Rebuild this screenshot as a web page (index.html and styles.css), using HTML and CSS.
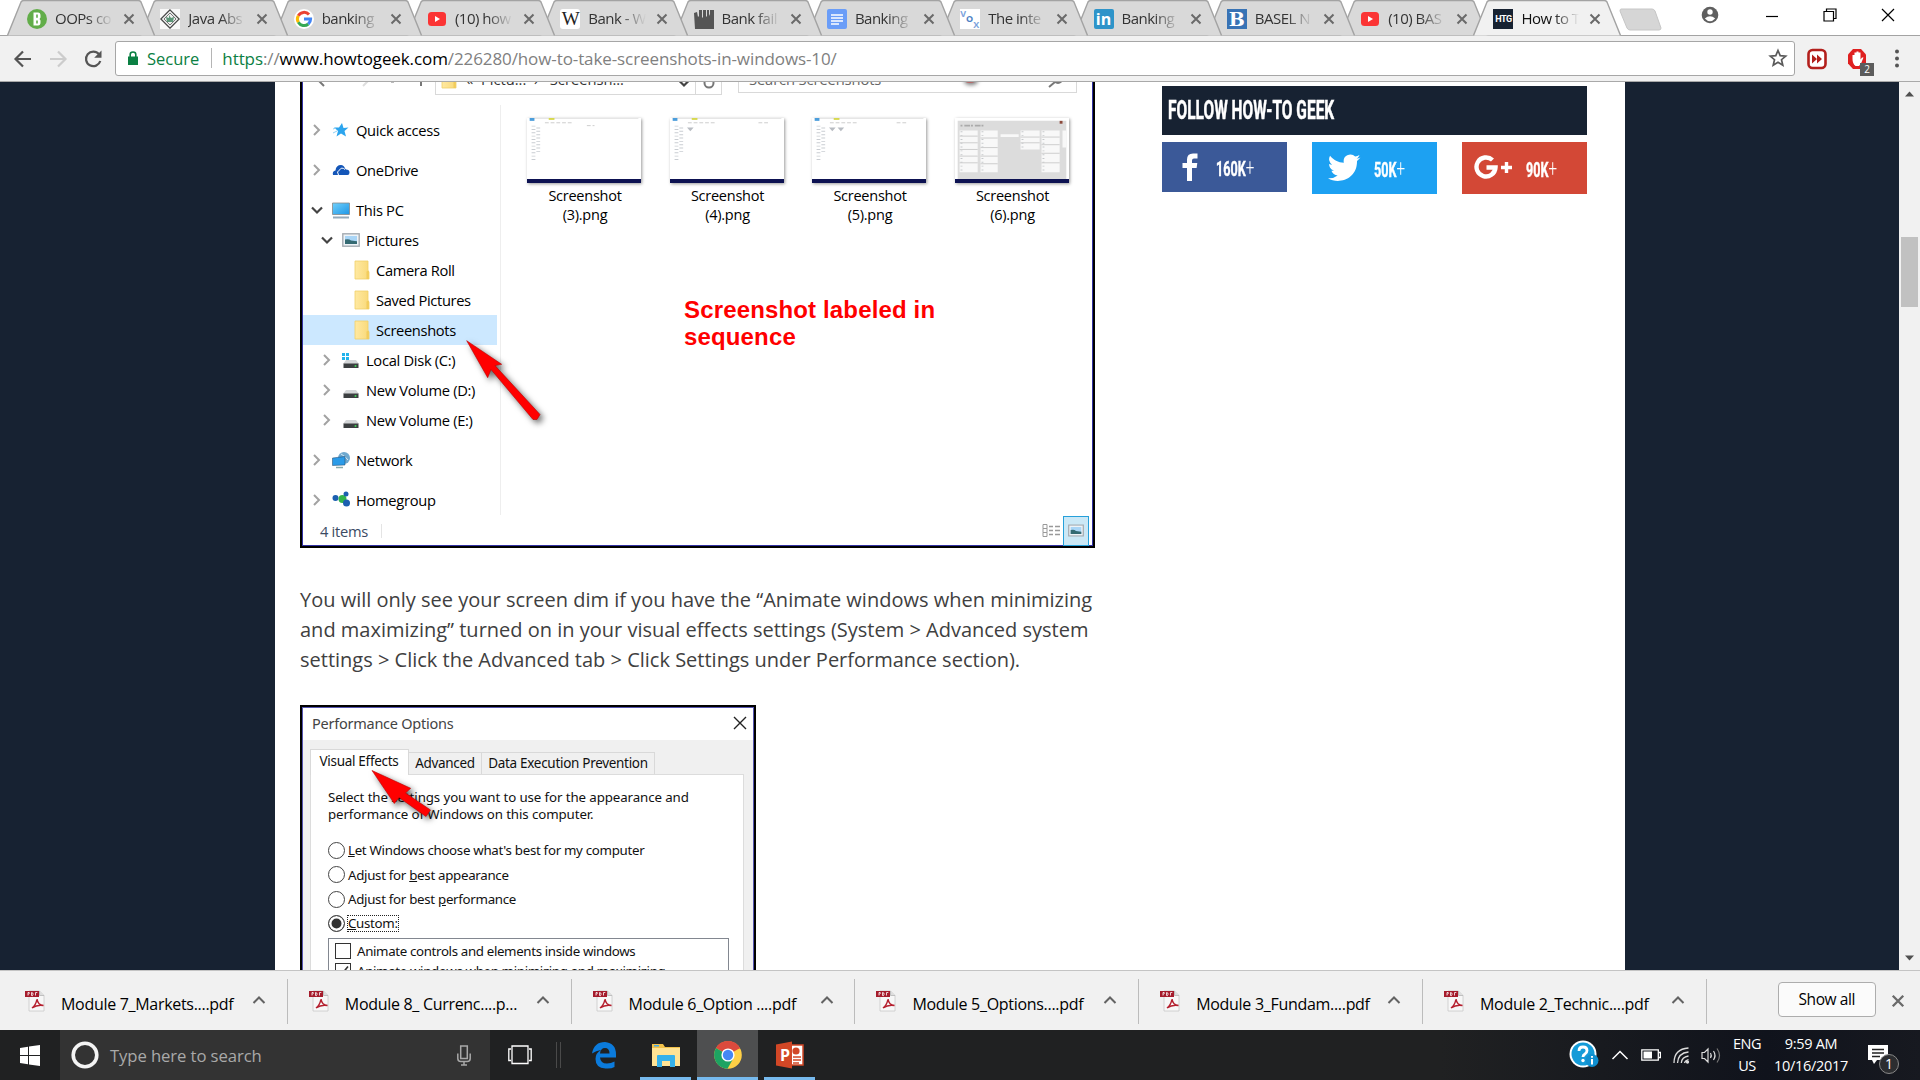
FILE: index.html
```
<!DOCTYPE html>
<html lang="en">
<head>
<meta charset="utf-8">
<title>How to Take Screenshots in Windows 10</title>
<link rel="stylesheet" href="styles.css">
</head>
<body>
<svg width="0" height="0" class="defs">
  <defs>
    <linearGradient id="screen" x1="0" y1="0" x2="1" y2="1"><stop offset="0" stop-color="#6fd0fb"/><stop offset="1" stop-color="#1e96e6"/></linearGradient>
    <linearGradient id="folderFill" x1="0" y1="0" x2="1" y2="0"><stop offset="0" stop-color="#ffe9a2"/><stop offset="1" stop-color="#f9d978"/></linearGradient>
    <symbol id="tab" viewBox="0 0 148 36"><path d="M.5 35.5 14 2Q15 .5 17 .5H131Q133 .5 134 2L147.5 35.5" stroke="#a3a3a3" stroke-width="1.4"/></symbol>
    <symbol id="x" viewBox="0 0 12 12"><path d="M1.5 1.5 10.500 10.500M10.500 1.500 1.500 10.500" stroke="#6a6a6a" stroke-width="2" fill="none"/></symbol>
    <symbol id="yt" viewBox="0 0 20 20"><rect x="1" y="3" width="18" height="14" rx="3.500" fill="#fb3434"/><path d="M8 7v6l5-3z" fill="#fff"/></symbol>
    <symbol id="right" viewBox="0 0 12 12"><path d="M3 1 8 6 3 11" stroke="#a2a2a2" stroke-width="2" fill="none"/></symbol>
    <symbol id="down" viewBox="0 0 12 12"><path d="M1 3.500 6 8.500 11 3.500" stroke="#444" stroke-width="2.200" fill="none"/></symbol>
    <symbol id="folder" viewBox="0 0 16 20"><path d="M1 1h13v9.500l1 1.500v7H1z" fill="url(#folderFill)" stroke="#f0cf68" stroke-width=".8"/><path d="M12.500 11.500 14.800 10.500v8.500h-2.300z" fill="#f2cc5c"/></symbol>
    <symbol id="drive" viewBox="0 0 18 18"><path d="M4 8h10l3 4H1z" fill="#d4d6d8"/><path d="M1.500 11.500h15V16h-15z" fill="#3c3f41"/><circle cx="13.500" cy="14" r="1" fill="#3fd455"/></symbol>
    <symbol id="pics" viewBox="0 0 18 14"><rect x=".8" y=".8" width="16.400" height="12.400" fill="#eef3f7" stroke="#a4abb1" stroke-width="1.400"/><path d="M3 3h12v8H3z" fill="#a9d5f6"/><path d="M3 6.500q4-1 6 1l6 .8V11H3z" fill="#346a72"/></symbol>
    <symbol id="pdf" viewBox="0 0 20 22"><path d="M4 1h10.500l4.500 4.500V21H4z" fill="#f7f7f7" stroke="#c9c9c9" stroke-width=".8"/><path d="M14.500 1v4.500H19" fill="#ddd" stroke="#b5b5b5" stroke-width=".8"/><path d="M0 1h14v6H0z" fill="#a51c2c"/><path d="M3 5.500v-3h1.200q1 .9-1 1.700M6.500 5.500v-3q2 0 1.500 2t-1.500 1M10.500 5.500v-3h1.800" stroke="#fff" stroke-width=".8" fill="none"/><path d="M7 18q4-3 5-9 .8 6 6.500 6.500-6-1.200-11.500 2.500z" fill="none" stroke="#b5202f" stroke-width="1.500"/></symbol>
    <symbol id="up" viewBox="0 0 14 10"><path d="M1.500 8 7 2.500 12.500 8" stroke="#636363" stroke-width="2" fill="none"/></symbol>
  </defs>
</svg>

<header class="tabs">
  <div class="tab" style="z-index:12"><svg class="shape"><use href="#tab"/></svg><svg class="fav" viewBox="0 0 20 20"><circle cx="10" cy="10" r="10" fill="#62ad49"/><path d="M6.500 3.500H11q2.500 0 2.500 3v2l-1 1.500 1 1.500v2q0 3-2.500 3H6.500z" fill="#fff"/><path d="M10 5.500v3.200M10 11.500v3" stroke="#62ad49" stroke-width="1.600"/></svg><span class="name">OOPs co</span><svg class="close"><use href="#x"/></svg></div>
  <div class="tab" style="z-index:11"><svg class="shape"><use href="#tab"/></svg><svg class="fav" viewBox="0 0 20 20"><path d="M0 0h20v20H0z" fill="#f8f8f8"/><path d="M10 .8 19.200 10 10 19.200.8 10z" fill="#eee" stroke="#444" stroke-width="1.200"/><path d="M10 4 16 10 10 16 4 10z" fill="none" stroke="#777"/><path d="M6 8l3 1V6l2 3 3-1-1 5H7z" fill="#5d9678"/></svg><span class="name">Java Abs</span><svg class="close"><use href="#x"/></svg></div>
  <div class="tab" style="z-index:10"><svg class="shape"><use href="#tab"/></svg><svg class="fav" viewBox="0 0 20 20"><circle cx="10" cy="10" r="10" fill="#fff"/><g fill="none" stroke-width="3"><path d="M15 5.600A6.600 6.600 0 0 0 4.300 6.700" stroke="#ea4335"/><path d="M4.300 6.700A6.600 6.600 0 0 0 4.300 13.300" stroke="#fbbc05"/><path d="M4.300 13.300A6.600 6.600 0 0 0 14.300 15" stroke="#34a853"/><path d="M14.300 15A6.600 6.600 0 0 0 16.600 10H10" stroke="#4285f4"/></g></svg><span class="name">banking</span><svg class="close"><use href="#x"/></svg></div>
  <div class="tab" style="z-index:9"><svg class="shape"><use href="#tab"/></svg><svg class="fav"><use href="#yt"/></svg><span class="name">(10) how</span><svg class="close"><use href="#x"/></svg></div>
  <div class="tab" style="z-index:8"><svg class="shape"><use href="#tab"/></svg><span class="fav wiki">W</span><span class="name">Bank - W</span><svg class="close"><use href="#x"/></svg></div>
  <div class="tab" style="z-index:7"><svg class="shape"><use href="#tab"/></svg><svg class="fav" viewBox="0 0 20 20"><path d="M0 4l3-1 1 5 1-1V1h3v7l1 1V1h3v6l1 1V1h2v6l1-2V1h4v19H1z" fill="#555"/></svg><span class="name">Bank fail</span><svg class="close"><use href="#x"/></svg></div>
  <div class="tab" style="z-index:6"><svg class="shape"><use href="#tab"/></svg><svg class="fav" viewBox="0 0 20 20"><rect width="20" height="20" rx="2" fill="#6a9df8"/><path d="M4 6h12M4 9h12M4 12h12M4 15h8" stroke="#fff" stroke-width="1.500"/></svg><span class="name">Banking</span><svg class="close"><use href="#x"/></svg></div>
  <div class="tab" style="z-index:5"><svg class="shape"><use href="#tab"/></svg><span class="fav vox"><b>V</b><b>O</b><b>X</b></span><span class="name">The inte</span><svg class="close"><use href="#x"/></svg></div>
  <div class="tab" style="z-index:4"><svg class="shape"><use href="#tab"/></svg><span class="fav linked">in</span><span class="name">Banking</span><svg class="close"><use href="#x"/></svg></div>
  <div class="tab" style="z-index:3"><svg class="shape"><use href="#tab"/></svg><span class="fav basel">B</span><span class="name">BASEL N</span><svg class="close"><use href="#x"/></svg></div>
  <div class="tab" style="z-index:2"><svg class="shape"><use href="#tab"/></svg><svg class="fav"><use href="#yt"/></svg><span class="name">(10) BAS</span><svg class="close"><use href="#x"/></svg></div>
  <div class="tab active" style="z-index:13"><svg class="shape"><use href="#tab"/></svg><span class="fav htg">HTG</span><span class="name">How to T</span><svg class="close"><use href="#x"/></svg></div>
  <svg class="newtab" width="44" height="24" viewBox="0 0 44 24"><path d="M3 1h31q2 0 3 2l6 17q0 2-2 2H12q-2 0-3-2L2 3Q2 1 3 1z" fill="#d6d6d6" stroke="#c6c6c6"/></svg>
  <div class="winctl">
    <svg width="18" height="18" viewBox="0 0 18 18"><circle cx="9" cy="9" r="8.300" fill="#5f5f5f"/><circle cx="9" cy="6" r="2.700" fill="#fff"/><path d="M3.800 12.500q5.200-4.500 10.400 0Q9 18 3.800 12.500z" fill="#fff"/></svg>
    <svg width="14" height="14" viewBox="0 0 14 14"><path d="M1 8.500h12" stroke="#000" stroke-width="1.200"/></svg>
    <svg width="14" height="14" viewBox="0 0 14 14" fill="none" stroke="#000" stroke-width="1.200"><path d="M1 3.500h9.500V13H1zM3.500 3.500V1H13v9.500h-2.500"/></svg>
    <svg width="14" height="14" viewBox="0 0 14 14"><path d="M1 1 13 13M13 1 1 13" stroke="#000" stroke-width="1.200"/></svg>
  </div>
</header>

<div class="toolbar">
  <svg class="nav" viewBox="0 0 20 20"><path d="M18 10H3M10 2.500 2.500 10l7.500 7.500" stroke="#555" stroke-width="2.200" fill="none"/></svg>
  <svg class="nav" viewBox="0 0 20 20"><path d="M2 10h15M10 2.500l7.500 7.500-7.500 7.500" stroke="#ccc" stroke-width="2.200" fill="none"/></svg>
  <svg class="nav" viewBox="0 0 20 20"><path d="M16 5.300A7.300 7.300 0 1 0 17.300 12" stroke="#555" stroke-width="2.200" fill="none"/><path d="M18.500 1.500v7.300h-7.300z" fill="#555"/></svg>
  <div class="address">
    <svg width="12" height="15" viewBox="0 0 12 15"><path d="M1 5.500h10V14H1z" fill="#0b8043"/><path d="M3.200 6V3.500q0-2.500 2.800-2.500t2.800 2.500V6" fill="none" stroke="#0b8043" stroke-width="1.600"/></svg>
    <span class="secure">Secure</span><i class="bar"></i>
    <span class="url"><em>https</em>://<b>www.howtogeek.com</b>/226280/how-to-take-screenshots-in-windows-10/</span>
    <svg class="star" width="20" height="20" viewBox="0 0 20 20"><path d="M10 2.500l2.200 5.100 5.500.5-4.200 3.600 1.300 5.500L10 14.300l-4.800 2.900 1.300-5.500L2.300 8.100l5.500-.5z" fill="none" stroke="#5a5a5a" stroke-width="1.700"/></svg>
  </div>
  <svg class="ext" width="20" height="22" viewBox="0 0 20 22"><rect x="1.500" y="2" width="17" height="18" rx="4" fill="#fff" stroke="#b3201c" stroke-width="2.600"/><path d="M5 6.500 10 11l-5 4.500zM10 6.500 15 11l-5 4.500z" fill="#b3201c"/></svg>
  <div class="adblock"><svg width="20" height="20" viewBox="0 0 20 20"><path d="M6 0h8l5 5.500v9L14 20H6l-5-5.500v-9z" fill="#df2020"/><path d="M5.500 10V6h2V3.500h2V2.500h2v1h2v7l1.500-2h1.500l-2.500 6-2 2.500H8.500q-3-2.500-3-7z" fill="#fff"/></svg><span>2</span></div>
  <svg class="dots" width="6" height="22" viewBox="0 0 6 22" fill="#555"><circle cx="3" cy="3.500" r="2"/><circle cx="3" cy="10.500" r="2"/><circle cx="3" cy="17.500" r="2"/></svg>
</div>

<main class="viewport">
  <div class="page">
    <article class="article">
      <div class="explorer">
        <div class="exbar">
          <div class="exnav"><svg width="110" height="12" viewBox="0 0 110 12" fill="none" stroke="#777" stroke-width="2"><path d="M14-3 21 4"/><path d="M66-2 60 4" stroke="#ddd"/><path d="M88 0h3" stroke="#bbb"/></svg><i class="upmark"></i></div>
          <div class="path"><svg class="pfolder" width="16" height="20"><use href="#folder"/></svg><span>«&nbsp;&nbsp;Pictu...&nbsp; ›&nbsp;&nbsp; Screensh...</span><svg class="pdown" width="12" height="12"><use href="#down"/></svg><span class="refresh"><svg width="14" height="14" viewBox="0 0 14 14"><circle cx="7" cy="6" r="4.500" fill="none" stroke="#777" stroke-width="2"/></svg></span></div>
          <div class="exsearch"><span>Search Screenshots</span><svg width="16" height="16" viewBox="0 0 16 16" fill="none" stroke="#777" stroke-width="2"><circle cx="10" cy="5" r="4"/><path d="M7 8l-6 5"/></svg></div>
          <i class="blob"></i>
        </div>
        <div class="exbody">
          <nav class="tree">
            <div class="row gap"><svg class="ch"><use href="#right"/></svg><svg class="ic" viewBox="0 0 18 18"><path d="M10 2l1.500 5 5-.5-4 3.500 1.500 5.500-5-3-4.500 3 1.500-5.500L2 6.500h5z" fill="#2ca5ee"/><path d="M1 12l4-2M1 8l3-1" stroke="#8dd0f6"/></svg>Quick access</div>
            <div class="row gap"><svg class="ch"><use href="#right"/></svg><svg class="ic" viewBox="0 0 18 18"><path d="M1 14q-1-4 2.500-4.500Q4 4 9 4q3 0 4 3.500l1 1q3.500 0 3.500 3 0 2.500-2 2.500z" fill="#1456b8"/><path d="M6.500 14q-2.500-3.500 1-5 2-3.500 5.500-.5" fill="none" stroke="#fff"/></svg>OneDrive</div>
            <div class="row"><svg class="ch"><use href="#down"/></svg><svg class="ic" viewBox="0 0 18 18"><path d="M.5 2h17v11.500H.5z" fill="url(#screen)" stroke="#888" stroke-width=".8"/><path d="M1 16.500h16" stroke="#94aabb" stroke-width="2"/></svg>This PC</div>
            <div class="row in1"><svg class="ch"><use href="#down"/></svg><svg class="ic" viewBox="0 -2 18 18"><use href="#pics" width="18" height="14"/></svg>Pictures</div>
            <div class="row in2"><svg class="fo"><use href="#folder"/></svg>Camera Roll</div>
            <div class="row in2"><svg class="fo"><use href="#folder"/></svg>Saved Pictures</div>
            <div class="row in2 sel"><svg class="fo"><use href="#folder"/></svg>Screenshots</div>
            <div class="row in1"><svg class="ch"><use href="#right"/></svg><svg class="ic" viewBox="0 0 18 18"><use href="#drive" width="18" height="18" y="1"/><path d="M0 2h3v3H0zM4 2h3v3H4zM0 6h3v3H0zM4 6h3v3H4z" fill="#21b3ec"/></svg>Local Disk (C:)</div>
            <div class="row in1"><svg class="ch"><use href="#right"/></svg><svg class="ic" viewBox="0 -1 18 18"><use href="#drive" width="18" height="18"/></svg>New Volume (D:)</div>
            <div class="row in1 gap"><svg class="ch"><use href="#right"/></svg><svg class="ic" viewBox="0 -1 18 18"><use href="#drive" width="18" height="18"/></svg>New Volume (E:)</div>
            <div class="row gap"><svg class="ch"><use href="#right"/></svg><svg class="ic" viewBox="0 0 18 18"><circle cx="12" cy="7" r="6" fill="#6fa9cf"/><path d="M9 3q4 2 7 6" stroke="#d4e8f4" fill="none"/><path d="M.5 7 13 5.500v8.500L.500 14.500z" fill="#2b9be8" stroke="#246" stroke-width=".5"/><path d="M4 16.500h7" stroke="#8aa" stroke-width="1.500"/></svg>Network</div>
            <div class="row"><svg class="ch"><use href="#right"/></svg><svg class="ic" viewBox="0 0 18 18"><circle cx="3.500" cy="7" r="3" fill="#1c5fb0"/><circle cx="10.500" cy="8" r="4" fill="#33b44a"/><circle cx="14" cy="3" r="2.500" fill="#1c5fb0"/><circle cx="14.500" cy="12" r="3.500" fill="#1c5fb0"/></svg>Homegroup</div>
          </nav>
          <div class="files">
            <div class="thumbs">
              <figure><div class="shot"><svg viewBox="0 0 114 64"><path d="M0 .500h114" stroke="#ddd" stroke-width=".8"/><path d="M0 0h5v3H0z" fill="#4b9ddb"/><path d="M20 0h6v2h-6z" fill="#d7d84e"/><path d="M16 5h28M60 8h8" stroke="#ccc" stroke-dasharray="4 2"/><path d="M4 8v36M9 10v28" stroke="#c9cdd2" stroke-width="4" stroke-dasharray="1 2.500"/></svg></div><figcaption>Screenshot<br>(3).png</figcaption></figure>
              <figure><div class="shot"><svg viewBox="0 0 114 64"><path d="M0 .500h114" stroke="#ddd" stroke-width=".8"/><path d="M0 0h5v3H0z" fill="#4b9ddb"/><path d="M20 0h6v2h-6z" fill="#d7d84e"/><path d="M16 5h28M90 5h10" stroke="#ccc" stroke-dasharray="4 2"/><path d="M4 8v36M9 10v28" stroke="#c9cdd2" stroke-width="4" stroke-dasharray="1 2.500"/><path d="M15 10h7l-3.500 4z" fill="#b8bcc2"/></svg></div><figcaption>Screenshot<br>(4).png</figcaption></figure>
              <figure><div class="shot"><svg viewBox="0 0 114 64"><path d="M0 .500h114" stroke="#ddd" stroke-width=".8"/><path d="M0 0h5v3H0z" fill="#4b9ddb"/><path d="M20 0h6v2h-6z" fill="#d7d84e"/><path d="M16 5h28M86 5h10" stroke="#ccc" stroke-dasharray="4 2"/><path d="M4 8v36M9 10v28" stroke="#c9cdd2" stroke-width="4" stroke-dasharray="1 2.500"/><path d="M15 10h7l-3.500 4zM24 10h7l-3.500 4z" fill="#b8bcc2"/></svg></div><figcaption>Screenshot<br>(5).png</figcaption></figure>
              <figure><div class="shot"><svg viewBox="0 0 114 64"><path d="M0 3h114v61H0z" fill="#dcdcdc"/><path d="M3 8h25" stroke="#aaa" stroke-width="2" stroke-dasharray="2 2 6 1"/><path d="M107 3h3v3h-3z" fill="#8c4a3c"/><path d="M2 13h19v44H2zM24 13h18v44H24zM66 13h20v20H66zM88 13h19v44H88zM110 13h4v18h-4zM45 17h19v3H45z" fill="#f8f8f8"/><path d="M4 14v42M26 14v42M68 14v20M90 14v42" stroke="#c6c9cc" stroke-width="2" stroke-dasharray="1 3"/><path d="M2 19h19M2 26h19M2 33h19M2 40h19M2 47h19M24 21h18M24 31h18M24 40h18M24 48h18M66 20h20M66 26h20M88 20h19M88 28h19M88 37h19M88 47h19" stroke="#ccc" stroke-width="1"/></svg></div><figcaption>Screenshot<br>(6).png</figcaption></figure>
            </div>
            <p class="note">Screenshot labeled in<br>sequence</p>
          </div>
        </div>
        <div class="exstatus"><span>4 items</span><i></i>
          <svg class="listview" width="18" height="16" viewBox="0 0 18 16"><path d="M1 1.500h4v4H1zM1 5.500h4v4H1zM1 9.500h4v4H1z" fill="#fff" stroke="#999"/><path d="M7 3.500h4M13 3.500h5M7 7.500h4M13 7.500h5M7 11.500h4M13 11.500h5" stroke="#999" stroke-width="1.300"/></svg>
          <span class="gridview"><svg width="16" height="13" viewBox="0 0 18 14"><use href="#pics"/></svg></span></div>
        <svg class="arrow a1" width="100" height="100" viewBox="0 0 100 100"><path d="M6.700 8.700 41.700 32.300 35 33.600 80 82.500 77 87.500 73 87.500 31 37.500 27.700 45.700z" fill="red" stroke="#b00" stroke-width=".6"/></svg>
      </div>

      <p class="text">You will only see your screen dim if you have the “Animate windows when minimizing<br>and maximizing” turned on in your visual effects settings (System &gt; Advanced system<br>settings &gt; Click the Advanced tab &gt; Click Settings under Performance section).</p>

      <div class="dialog">
        <div class="dtitle"><span>Performance Options</span><svg width="14" height="14" viewBox="0 0 14 14"><path d="M1 1 13 13M13 1 1 13" stroke="#222" stroke-width="1.400"/></svg></div>
        <div class="dbody">
          <div class="dtabs"><span class="on">Visual Effects</span><span class="t2">Advanced</span><span class="t3">Data Execution Prevention</span></div>
          <div class="panel">
            <p class="intro">Select the settings you want to use for the appearance and<br>performance of Windows on this computer.</p>
            <div class="radio"><i></i><span><u>L</u>et Windows choose what's best for my computer</span></div>
            <div class="radio"><i></i><span>Adjust for <u>b</u>est appearance</span></div>
            <div class="radio"><i></i><span>Adjust for best <u>p</u>erformance</span></div>
            <div class="radio"><i class="dot"></i><span class="focus"><u>C</u>ustom:</span></div>
            <div class="list">
              <div class="check"><i></i><span>Animate controls and elements inside windows</span></div>
              <div class="check"><i><svg width="14" height="14" viewBox="0 0 14 14"><path d="M2 7l3.500 3.500L12 2.500" stroke="#333" stroke-width="1.600" fill="none"/></svg></i><span>Animate windows when minimizing and maximizing</span></div>
            </div>
          </div>
        </div>
        <svg class="arrow a2" width="80" height="70" viewBox="0 0 80 70"><path d="M9 6.500 47.700 24.300 42.500 29 67.500 46 63 52.500 36 33.500 31.300 39.500z" fill="red" stroke="#b00" stroke-width=".6"/></svg>
      </div>
    </article>

    <aside class="side">
      <h3><span>FOLLOW HOW-TO GEEK</span></h3>
      <div class="social">
        <a class="fb"><svg width="18" height="30" viewBox="0 0 18 30"><path d="M6 29V16H1.500v-5H6V7.500Q6 1.500 12 1.500h4.500v5H13q-2 0-2 2V11h5.300l-.7 5H11v13z" fill="#fff"/></svg><span>160K<small>+</small></span></a>
        <a class="tw"><svg width="33" height="28" viewBox="0 0 24 20"><path d="M23.600 2.400c-.9.400-1.800.6-2.800.8 1-.6 1.800-1.600 2.100-2.700-.9.600-2 1-3.100 1.200A4.900 4.900 0 0 0 11.500 6.100C7.500 5.900 3.900 4 1.500 1A4.900 4.900 0 0 0 3 7.600c-.8 0-1.600-.2-2.200-.6 0 2.400 1.600 4.400 3.900 4.900-.7.200-1.500.2-2.200.1.600 1.900 2.400 3.300 4.500 3.400A9.900 9.900 0 0 1-.1 17.400c7.600 4.900 21.500 1 21.200-12.500.9-.7 1.800-1.500 2.500-2.500z" fill="#fff"/></svg><span>50K<small>+</small></span></a>
        <a class="gp"><svg width="38" height="26" viewBox="0 0 38 26"><path d="M18.500 5A9.500 9.500 0 1 0 21.500 12.500H12.500" fill="none" stroke="#fff" stroke-width="4.400"/><path d="M32.500 7v11M27 12.500h11" stroke="#fff" stroke-width="3.400"/></svg><span>90K<small>+</small></span></a>
      </div>
    </aside>
  </div>
  <div class="scroll"><svg width="9" height="6" viewBox="0 0 9 6"><path d="M0 5.500 4.500.5 9 5.500z" fill="#505050"/></svg><i></i><svg width="9" height="6" viewBox="0 0 9 6"><path d="M0 .5 4.500 5.500 9 .5z" fill="#505050"/></svg></div>
</main>

<section class="downloads">
  <div class="dl"><svg class="pdf"><use href="#pdf"/></svg><span>Module 7_Markets....pdf</span><svg class="up"><use href="#up"/></svg></div>
  <div class="dl"><svg class="pdf"><use href="#pdf"/></svg><span>Module 8_ Currenc....p...</span><svg class="up"><use href="#up"/></svg></div>
  <div class="dl"><svg class="pdf"><use href="#pdf"/></svg><span>Module 6_Option ....pdf</span><svg class="up"><use href="#up"/></svg></div>
  <div class="dl"><svg class="pdf"><use href="#pdf"/></svg><span>Module 5_Options....pdf</span><svg class="up"><use href="#up"/></svg></div>
  <div class="dl"><svg class="pdf"><use href="#pdf"/></svg><span>Module 3_Fundam....pdf</span><svg class="up"><use href="#up"/></svg></div>
  <div class="dl"><svg class="pdf"><use href="#pdf"/></svg><span>Module 2_Technic....pdf</span><svg class="up"><use href="#up"/></svg></div>
  <button class="showall">Show all</button>
  <svg class="dx" width="14" height="14"><use href="#x"/></svg>
</section>

<footer class="taskbar">
  <div class="start"><svg width="20" height="21" viewBox="0 0 20 21" fill="#fff"><path d="M0 3 8 1.800V10H0zM9 1.600 20 0v10H9zM0 11h8v8.200L0 18zM9 11h11v10L9 19.400z"/></svg></div>
  <div class="search"><svg width="28" height="28" viewBox="0 0 28 28"><circle cx="14" cy="14" r="11.800" fill="none" stroke="#f4f4f4" stroke-width="3.600"/></svg><span>Type here to search</span><svg class="mic" width="14" height="21" viewBox="0 0 14 21" fill="none" stroke="#a8a8a8" stroke-width="1.500"><rect x="3.700" y="1" width="6.600" height="12.500"/><path d="M.8 8.500v5q0 3 3 3h6.400q3 0 3-3v-5M7 16.500v3M4 20h6"/></svg></div>
  <svg class="tview" width="24" height="20" viewBox="0 0 24 20" fill="none" stroke="#fff" stroke-width="1.300"><path d="M4 1h16v17.500H4zM3 4H.8v11.500H3M21 4h2.200v11.500H21"/></svg>
  <i class="tsep"></i>
  <div class="app edge"><svg width="26" height="28" viewBox="0 0 26 28"><path d="M1 12.500Q3 1 14 1q11 1 11 12.500v3H9q.5 6 7 6 4 0 7.500-2v5.500Q20 28 14.500 27.500 4.500 27 4.500 18q0-6 5.500-9-5 .5-9 3.500zM9 12.500h9.500q0-5.500-4.500-5.500T9 12.500z" fill="#0b7bdc"/></svg></div>
  <div class="app run"><svg width="28" height="24" viewBox="0 0 28 24"><path d="M0 1h11l2 3h15v19H0z" fill="#f2c24a"/><path d="M0 5h28v18H0z" fill="#ffe394"/><path d="M2 2h5v1.500H2z" fill="#4ba9df"/><path d="M5 24V13q0-1 1-1h16q1 0 1 1v11h-5v-6h-8v6z" fill="#35b1ea"/></svg></div>
  <div class="app run cur"><svg width="28" height="28" viewBox="0 0 28 28"><circle cx="14" cy="14" r="13.800" fill="#ffd046"/><path d="M14 14 2 7A13.800 13.800 0 0 1 26 7z" fill="#dc4a3d"/><path d="M14 14 2 7A13.800 13.800 0 0 0 13.500 27.800L19.500 17z" fill="#1da362"/><path d="M2 7A13.800 13.800 0 0 1 26 7.500H14z" fill="#dc4a3d"/><circle cx="14" cy="14" r="6.600" fill="#fff"/><circle cx="14" cy="14" r="5.200" fill="#4587f3"/></svg></div>
  <div class="app run"><svg width="28" height="28" viewBox="0 0 28 28"><path d="M13 4h14v20H13z" fill="#fff" stroke="#d24726" stroke-width="1.500"/><circle cx="20" cy="10" r="3.600" fill="#d24726"/><path d="M17 16h8M17 19h8M17 22h6" stroke="#d24726" stroke-width="1.500"/><path d="M0 3.500 16 .5v27L0 24.500z" fill="#d24726"/></svg><b>P</b></div>
  <div class="tray">
    <svg class="help" width="30" height="30" viewBox="0 0 30 30"><circle cx="14" cy="14" r="13.500" fill="#fff"/><circle cx="14" cy="14" r="11.500" fill="#149bd8"/><path d="M10 11q0-4 4-4t4 3.500q0 2-2 3.500-2 1.200-2 3" fill="none" stroke="#fff" stroke-width="2.800"/><circle cx="14" cy="20.500" r="1.700" fill="#fff"/><circle cx="23" cy="20.500" r="6.500" fill="#0f8fd0"/><path d="M23 19v5.500M23 16v1.800" stroke="#fff" stroke-width="2"/></svg>
    <svg class="tup" width="18" height="10" viewBox="0 0 18 10"><path d="M1.500 9 9 1.500 16.500 9" fill="none" stroke="#fff" stroke-width="1.500"/></svg>
    <svg class="bat" width="20" height="12" viewBox="0 0 20 12"><path d="M.8.800h16.500v10.400H.8zM18 3.500h1.500v5H18" fill="none" stroke="#fff" stroke-width="1.300"/><path d="M2.500 2.500H11v7H2.500z" fill="#fff"/></svg>
    <svg class="wifi" width="17" height="17" viewBox="0 0 17 17" fill="none" stroke="#ddd" stroke-width="1.300"><path d="M1 16Q1 2 15.500 1M4.500 16Q5 6 15.500 5M8.300 16q.4-6 7.200-7M11.500 16q.5-2.500 4-3.500"/><circle cx="14.500" cy="15" r="1" fill="#fff"/></svg>
    <svg class="vol" width="20" height="17" viewBox="0 0 20 17" fill="none" stroke="#ddd" stroke-width="1.200"><path d="M1 5.500h2.500L7 2v13l-3.500-3.500H1zM9.500 6q1.500 2.500 0 5M12.500 4q3 4.500 0 9"/><path d="M16 1.500q5 7 0 14" stroke="#777"/></svg>
    <span class="lang">ENG<br>US</span>
    <span class="clock">9:59 AM<br>10/16/2017</span>
    <div class="notif"><svg width="20" height="20" viewBox="0 0 20 20"><path d="M0 0h20v15H9l-3 4-2-4H0z" fill="#fff"/><path d="M4 4.500h12M4 8h12M4 11.500h8" stroke="#222" stroke-width="1.300"/></svg><b>1</b></div>
  </div>
</footer>
</body>
</html>
```
FILE: styles.css
```
* { box-sizing: border-box; }
body { margin: 0; width: 1920px; height: 1080px; overflow: hidden; display: flex; flex-direction: column; font-family: "Open Sans", "Noto Sans", sans-serif; font-size: 15px; color: #000; background: #fff; }
.defs { position: absolute; }
svg { flex: none; display: block; }

/* tab strip */
.tabs { height: 36px; flex: none; display: flex; padding-left: 7px; background: #fff; box-shadow: inset 0 -1px #a3a3a3; }
.tab { position: relative; width: 148px; height: 36px; margin-right: -14.7px; padding: 9px 0 0 20px; display: flex; flex: none; }
.shape { position: absolute; left: 0; top: 0; width: 148px; height: 36px; fill: #d9d9d9; }
.active .shape { fill: #f1f1f1; }
.active::after { content: ""; position: absolute; left: 1px; right: 1px; bottom: -1px; height: 1px; background: #f1f1f1; }
.fav { position: relative; width: 20px; height: 20px; flex: none; }
.name { position: relative; width: 58px; margin: -1px 0 0 8px; white-space: nowrap; font-size: 15px; line-height: 20px; letter-spacing: -.5px; color: #333; -webkit-mask-image: linear-gradient(90deg, #000 55%, transparent); mask-image: linear-gradient(90deg, #000 55%, transparent); }
.active .name { color: #111; }
.close { position: relative; width: 12px; height: 12px; margin: 4px 0 0 10px; }
.wiki { background: #fff; border-radius: 3px; font: 19px/20px "Liberation Serif", serif; text-align: center; letter-spacing: -1px; color: #222; }
.linked { background: #2e94c9; border-radius: 2px; color: #fff; font: bold 16px/20px "Open Sans", sans-serif; text-align: center; }
.basel { background: #3873b5; color: #fff; font: bold 19px/20px "DejaVu Serif", serif; text-align: center; }
.htg { background: #172232; color: #fff; font: bold 9px/20px Roboto, sans-serif; text-align: center; letter-spacing: -.4px; }
.vox { background: #fff; display: flex; color: #7ba3dc; font: 9px/9px "Open Sans", sans-serif; }
.vox b:nth-child(2) { padding-top: 5px; color: #4c80c4; }
.vox b:nth-child(3) { padding-top: 11px; }
.newtab { margin: 8px 0 0 11px; position: relative; }
.winctl { margin-left: auto; display: flex; align-items: center; padding: 0 25px 6px 0; gap: 44px; }
.winctl svg:first-child { margin-right: 2px; }

/* toolbar */
.toolbar { height: 46px; flex: none; display: flex; align-items: center; padding: 0 0 0 13px; background: #f1f1f1; border-bottom: 1px solid #a9a9a9; }
.nav { width: 20px; height: 20px; margin-right: 15px; }
.nav:nth-child(3) { margin-right: 12px; }
.address { width: 1680px; height: 35px; display: flex; align-items: center; padding: 0 6px 1px 11px; border: 1px solid #a6a6a6; border-radius: 3px; background: #fff; font-size: 17px; }
.secure { margin-left: 8px; color: #0b8043; font-size: 16.500px; letter-spacing: 0; }
.bar { width: 1px; height: 20px; margin: 0 10px 0 12px; background: #b5b5b5; }
.url { color: #808080; letter-spacing: -.1px; }
.url em { font-style: normal; color: #0b8043; }
.url b { font-weight: 400; color: #000; }
.star { margin-left: auto; }
.ext { margin-left: 12px; }
.adblock { position: relative; margin-left: 20px; width: 28px; height: 20px; }
.adblock span { position: absolute; left: 13px; top: 14px; width: 14px; height: 13px; background: #5c5c5c; color: #fff; font-size: 10px; line-height: 13px; text-align: center; }
.dots { margin-left: 19px; }

/* web page */
.viewport { height: 888px; flex: none; display: flex; background: #172232; overflow: hidden; }
.page { width: 1350px; margin-left: 275px; background: #fff; display: flex; padding-left: 25px; gap: 67px; }
.scroll { margin-left: auto; width: 21px; background: #f1f1f1; display: flex; flex-direction: column; align-items: center; padding: 9px 0; }
.scroll i { width: 17px; height: 70px; margin: 140px 0 auto; background: #c1c1c1; }
.article { width: 795px; }

/* file explorer */
.explorer { position: relative; height: 466px; border: 2px solid #000; border-top: 0; box-shadow: inset 1px -1px #3232a4, inset -1px 0 #3232a4; padding: 0 1px 1px; display: flex; flex-direction: column; font-size: 14.700px; letter-spacing: -.3px; }
.exbar { height: 23px; display: flex; position: relative; }
.exnav { width: 132px; position: relative; }
.upmark { position: absolute; left: 117px; top: 0; width: 2px; height: 4px; background: #777; }
.path { width: 287px; height: 13px; border: 1px solid #d9d9d9; border-top: 0; overflow: hidden; display: flex; color: #333; white-space: nowrap; line-height: 19px; letter-spacing: 0; }
.path > span:nth-child(2) { margin: -12px 0 0 9px; width: 190px; }
.pfolder { margin: -13px 0 0 5px; }
.pdown { margin: -5px 0 0 26px; }
.refresh { margin-left: 5px; width: 26px; border-left: 1px solid #d9d9d9; padding-left: 6px; }
.refresh svg { margin-top: -5px; }
.exsearch { margin-left: 16px; width: 339px; height: 11px; border: 1px solid #d9d9d9; border-top: 0; display: flex; justify-content: space-between; padding: 0 12px 0 10px; color: #666; overflow: hidden; letter-spacing: -.1px; }
.exsearch span { margin-top: -12px; line-height: 19px; }
.exsearch svg { margin-top: -8px; }
.blob { position: absolute; left: 660px; top: -8px; width: 14px; height: 9px; background: #b66; border-radius: 50%; box-shadow: 1px 2px 4px #777; }
.exbody { height: 412px; display: flex; }
.tree { width: 198px; padding-top: 10px; border-right: 1px solid #eee; }
.row { height: 30px; width: 194px; display: flex; align-items: center; padding-left: 8px; white-space: nowrap; }
.row.gap { margin-bottom: 10px; }
.in1 { padding-left: 18px; }
.in2 { padding-left: 51px; letter-spacing: -.35px; }
.sel { background: #cce8ff; }
.ch { width: 12px; height: 12px; margin-right: 9px; }
.ic { width: 18px; height: 18px; margin-right: 6px; }
.fo { width: 16px; height: 20px; margin-right: 6px; }
.files { padding: 13px 0 0 26px; }
.thumbs { display: flex; gap: 28.500px; }
figure { margin: 0; width: 114px; text-align: center; }
.shot { height: 65px; border-bottom: 4px solid #0d1252; box-shadow: 1px 1px 3px #999; }
.shot svg { height: 61px; width: 114px; }
figcaption { margin: 3px -1px 0 1px; line-height: 19px; font-size: 14.500px; letter-spacing: -.25px; }
.note { margin: 72px 0 0 157px; font: bold 24px/27.500px "Liberation Sans", sans-serif; color: red; letter-spacing: .15px; white-space: nowrap; }
.exstatus { height: 30px; display: flex; align-items: center; padding: 1px 0 0 17px; color: #3b4a63; }
.exstatus > i { width: 1px; height: 14px; margin-left: 13px; background: #e4e4e4; }
.listview { margin-left: auto; }
.gridview { width: 26px; height: 30px; margin: 0 3px 0 3px; border: 1px solid #26a0da; background: #cbe8f6; display: flex; align-items: center; justify-content: center; }
.arrow { position: absolute; filter: drop-shadow(3px 3px 3px rgba(0,0,0,.6)); }
.a1 { left: 158px; top: 250px; }

.text { margin: 37px 0 30px; font-size: 20px; line-height: 30px; color: #404040; white-space: nowrap; letter-spacing: 0; }

/* dialog */
.dialog { position: relative; width: 456px; height: 400px; border: 2px solid #000; box-shadow: inset 0 0 0 1px #5555b0; padding: 1px; background: #f0f0f0; background-clip: padding-box; font-family: "Noto Sans", sans-serif; font-size: 13.300px; letter-spacing: -.3px; color: #111; }
.dtitle { height: 32px; margin: 0; background: #fff; display: flex; justify-content: space-between; align-items: center; padding: 0 6px 2px 9px; font-size: 14.500px; letter-spacing: -.25px; color: #444; }
.dbody { padding: 9px 9px 0 7px; }
.dtabs { display: flex; align-items: flex-end; height: 25px; line-height: 20px; white-space: nowrap; font-size: 13.500px; }
.dtabs span { height: 22px; border: 1px solid #d9d9d9; border-bottom: 0; text-align: center; }
.dtabs .on { width: 99px; height: 26px; margin-bottom: -1px; background: #fff; line-height: 22px; padding-right: 1px; position: relative; }
.dtabs .t2 { width: 73px; border-left: 0; }
.dtabs .t3 { width: 173px; border-left: 0; }
.panel { height: 330px; background: #fff; border: 1px solid #dcdcdc; padding: 14px 14px 0 17px; white-space: nowrap; }
.intro { margin: 0 0 16px; line-height: 16.500px; letter-spacing: -.1px; }
.radio { height: 24.500px; display: flex; align-items: center; }
.radio i { width: 17px; height: 17px; margin-right: 3px; border: 1.500px solid #444; border-radius: 50%; background: #fff; }
.radio .dot { box-shadow: inset 0 0 0 2.500px #fff; background: #333; }
.focus { outline: 1px dotted #222; line-height: 15px; }
.list { margin-top: 2px; height: 200px; border: 1px solid #828790; padding: 2px 6px; }
.check { height: 20px; display: flex; align-items: center; letter-spacing: -.35px; }
.check i { width: 16px; height: 16px; margin-right: 6px; border: 1.500px solid #333; }
.a2 { left: 61px; top: 57px; }

/* sidebar */
.side { width: 425px; padding-top: 4px; color: #fff; font-family: Roboto, sans-serif; font-weight: 700; }
.side h3 { margin: 0 0 7px; height: 49px; padding-left: 6px; background: #172232; font-size: 25px; line-height: 50px; white-space: nowrap; }
.side h3 span { display: inline-block; transform: scaleX(.62); transform-origin: 0 50%; -webkit-text-stroke: .5px #fff; }
.social { display: flex; gap: 25px; align-items: flex-start; }
.social a { width: 125px; height: 52px; display: flex; align-items: center; }
.social a span { display: inline-block; width: 40px; font-size: 20px; line-height: 24px; transform: scaleX(.63); transform-origin: 0 50%; padding-top: 3px; -webkit-text-stroke: .4px #fff; white-space: nowrap; }
.social small { font-size: 24px; line-height: 20px; font-weight: 300; -webkit-text-stroke: 0; }
.social .fb { background: #3b5998; height: 50px; padding-left: 19px; gap: 17px; }
.tw { background: #1da1f2; padding-left: 16px; gap: 13px; }
.gp { background: #d34836; padding-left: 12px; gap: 14px; }

/* downloads */
.downloads { height: 60px; flex: none; display: flex; align-items: flex-start; background: #f1f1f1; border-top: 1px solid #c4c4c4; padding-top: 8px; }
.dl { width: 283.800px; height: 45px; flex: none; border-right: 1px solid #bcbcbc; display: flex; padding-left: 21px; font-size: 16px; letter-spacing: -.3px; white-space: nowrap; }
.dl:first-child { width: 287.800px; padding-left: 25px; }
.dl span { width: 180px; margin: 14px 0 0 16px; line-height: 22px; }
.pdf { width: 20px; height: 22px; margin-top: 11px; }
.up { width: 14px; height: 10px; margin: 16px 0 0 11px; }
.showall { width: 98px; height: 35px; margin: 3px 0 0 71px; padding: 0 0 2px; border: 1px solid #adadad; border-radius: 4px; background: #fbfbfb; font: 15.500px "Open Sans", sans-serif; letter-spacing: -.4px; }
.dx { margin: 15px 0 0 15px; }

/* taskbar */
.taskbar { height: 50px; flex: none; display: flex; align-items: center; color: #fff; background: linear-gradient(90deg, #202122 75%, #10131c 92%, #171920); }
.start { width: 60px; padding-left: 20px; }
.search { width: 430px; height: 50px; background: #333; display: flex; align-items: center; padding: 0 19px 0 11px; color: #a9a9a9; font-size: 16.700px; letter-spacing: -.1px; }
.search span { margin-left: 11px; }
.mic { margin-left: auto; }
.tview { margin-left: 18px; }
.tsep { width: 5px; height: 26px; margin: 0 13px 0 24px; border: solid #4a4a4a; border-width: 0 1px; }
.app { position: relative; width: 51px; height: 50px; margin-right: 6px; display: flex; align-items: center; justify-content: center; }
.edge { width: 60px; }
.run { border-bottom: 3px solid #76b9ed; padding-top: 3px; }
.cur { width: 61px; background: #4e4f50; }
.app b { position: absolute; left: 16px; top: 15px; font: bold 16px/20px "Open Sans", sans-serif; }
.tray { margin-left: auto; height: 50px; width: 351px; display: flex; align-items: center; }
.tup { margin-left: 12px; }
.bat { margin-left: 12px; }
.wifi { margin-left: 12px; }
.vol { margin-left: 11px; }
.lang, .clock { text-align: center; line-height: 22.500px; font-size: 14.500px; letter-spacing: -.5px; white-space: nowrap; width: 38px; margin-left: 7px; }
.clock { width: 84px; margin-left: 3px; letter-spacing: -.3px; }
.notif { position: relative; margin-left: 15px; width: 45px; height: 20px; }
.notif b { position: absolute; left: 11px; top: 9px; width: 20px; height: 20px; border: 1px solid #888; border-radius: 50%; background: #2c2d30; font-weight: 400; font-size: 14px; line-height: 18px; text-align: center; }
```
